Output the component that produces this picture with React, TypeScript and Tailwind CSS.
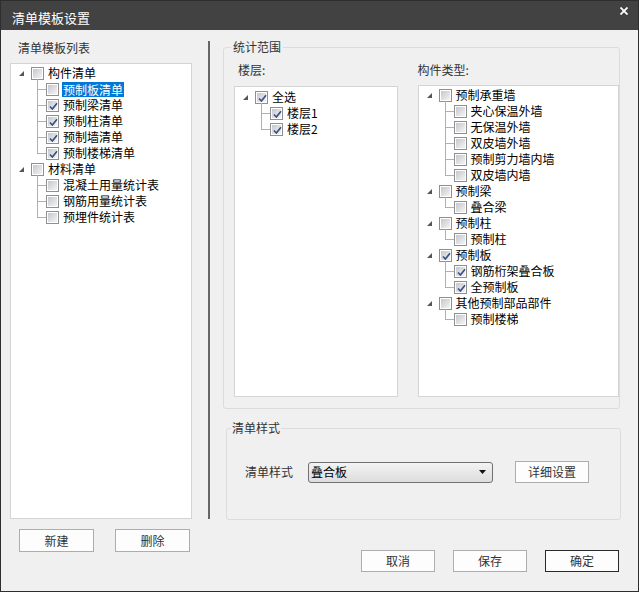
import React from 'react';

type TreeNode = {
  label: string;
  checked?: boolean;
  selected?: boolean;
  children?: TreeNode[];
};

const listTree: TreeNode[] = [
  {
    label: '构件清单',
    children: [
      { label: '预制板清单', selected: true },
      { label: '预制梁清单', checked: true },
      { label: '预制柱清单', checked: true },
      { label: '预制墙清单', checked: true },
      { label: '预制楼梯清单', checked: true },
    ],
  },
  {
    label: '材料清单',
    children: [
      { label: '混凝土用量统计表' },
      { label: '钢筋用量统计表' },
      { label: '预埋件统计表' },
    ],
  },
];

const floorTree: TreeNode[] = [
  {
    label: '全选',
    checked: true,
    children: [
      { label: '楼层1', checked: true },
      { label: '楼层2', checked: true },
    ],
  },
];

const typeTree: TreeNode[] = [
  {
    label: '预制承重墙',
    children: [
      { label: '夹心保温外墙' },
      { label: '无保温外墙' },
      { label: '双皮墙外墙' },
      { label: '预制剪力墙内墙' },
      { label: '双皮墙内墙' },
    ],
  },
  { label: '预制梁', children: [{ label: '叠合梁' }] },
  { label: '预制柱', children: [{ label: '预制柱' }] },
  {
    label: '预制板',
    checked: true,
    children: [
      { label: '钢筋桁架叠合板', checked: true },
      { label: '全预制板', checked: true },
    ],
  },
  { label: '其他预制部品部件', children: [{ label: '预制楼梯' }] },
];

const CheckBox = ({ checked }: { checked?: boolean }) => (
  <span className="relative flex h-[13px] w-[13px] shrink-0 items-center justify-center border border-[#8e8f8f] bg-white">
    <span className="h-[9px] w-[9px] bg-linear-to-br from-[#c4c7cc] to-[#f4f4f4]" />
    {checked && (
      <svg className="absolute left-[1px] top-[1px]" width="11" height="11" viewBox="0 0 11 11">
        <path d="M2 5.5 L4.4 8 L9 2.2" fill="none" stroke="#3d4f8c" strokeWidth="1.7" />
      </svg>
    )}
  </span>
);

const Expander = () => (
  <svg className="mt-[1px] shrink-0" width="5" height="5" viewBox="0 0 5 5">
    <path d="M5 0 L5 5 L0 5 Z" fill="#555" />
  </svg>
);

const Tree = ({ nodes, className }: { nodes: TreeNode[]; className: string }) => (
  <div className={`flex flex-col ${className}`}>
    {nodes.map((node) => (
      <React.Fragment key={node.label}>
        <div className="flex h-4 items-center pl-[8px]">
          <Expander />
          <span className="ml-[7px]">
            <CheckBox checked={node.checked} />
          </span>
          <span className="ml-[4px] leading-4 whitespace-nowrap">{node.label}</span>
        </div>
        {node.children?.map((child, i) => {
          const last = i === node.children!.length - 1;
          return (
            <div key={child.label + i} className="relative flex h-4 items-center pl-[35px]">
              {/* tree connector lines */}
              <span
                className={`absolute left-[26px] w-px bg-[#b0b0b0] ${i === 0 ? '-top-[2px]' : 'top-0'} ${
                  last ? 'h-[9px]' : 'h-4'
                } ${i === 0 && last ? 'h-[11px]' : ''} ${i === 0 && !last ? 'h-[18px]' : ''}`}
              />
              <span className="absolute left-[26px] top-[8px] h-px w-[9px] bg-[#b0b0b0]" />
              <CheckBox checked={child.checked} />
              {child.selected ? (
                <span className="ml-[3px] bg-[#0078d7] px-[1px] leading-[15px] whitespace-nowrap text-white">
                  {child.label}
                </span>
              ) : (
                <span className="ml-[4px] leading-4 whitespace-nowrap">{child.label}</span>
              )}
            </div>
          );
        })}
      </React.Fragment>
    ))}
  </div>
);

const Button = ({ label, primary, className = '' }: { label: string; primary?: boolean; className?: string }) => (
  <button
    className={`flex items-center justify-center border bg-[#fdfdfd] text-[12px] text-[#333] ${
      primary ? 'border-[#2a2a2a]' : 'border-[#adadad]'
    } ${className}`}
  >
    {label}
  </button>
);

export default function App() {
  return (
    <div
      className="flex h-[592px] w-[639px] flex-col border border-[#2e2e2e] bg-[#f0f0f0] text-[12px] text-black"
      style={{ fontFamily: '"Noto Sans CJK SC", "Noto Sans", sans-serif' }}
    >
      {/* title bar */}
      <div className="flex h-[29px] shrink-0 items-center justify-between bg-[#424242] pl-[11px] pr-[10px]">
        <span className="mt-[5px] text-[13px] text-white">清单模板设置</span>
        <svg className="-mt-[9px]" width="8" height="8" viewBox="0 0 8 8">
          <path d="M0.5 0.5 L7.5 7.5 M7.5 0.5 L0.5 7.5" stroke="#fff" strokeWidth="1.8" />
        </svg>
      </div>

      <div className="flex flex-1">
        {/* left: template list */}
        <div className="ml-[9px] flex w-[182px] flex-col pt-[10px]">
          <div className="pl-[8px] leading-4 text-[#333]">清单模板列表</div>
          <div className="mt-[7px] h-[456px] border border-[#d4d4d4] bg-white">
            <Tree nodes={listTree} className="pt-[1px]" />
          </div>
          <div className="mt-[10px] flex gap-[21px] pl-[9px]">
            <Button label="新建" className="h-[23px] w-[75px]" />
            <Button label="删除" className="h-[23px] w-[75px]" />
          </div>
        </div>

        {/* splitter */}
        <div className="ml-[16px] mt-[11px] h-[478px] w-[2px] bg-[#666]" />

        {/* right */}
        <div className="flex flex-1 flex-col">
          <div className="relative ml-[13px] mt-[17px] h-[362px] w-[397px] rounded-[3px] border border-[#dcdcdc]">
            <span className="absolute -top-[9px] left-[7px] bg-[#f0f0f0] px-[2px] leading-4 text-[#333]">统计范围</span>
            <div className="flex pt-[14px]">
              <div className="ml-[10px] flex w-[164px] flex-col">
                <div className="pl-[4px] leading-4 text-[#333]">楼层:</div>
                <div className="mt-[8px] h-[311px] border border-[#d4d4d4] bg-white">
                  <Tree nodes={floorTree} className="pt-[2px]" />
                </div>
              </div>
              <div className="ml-[20px] flex w-[202px] flex-col">
                <div className="leading-4 text-[#333]">构件类型:</div>
                <div className="mt-[7px] h-[312px] border border-[#d4d4d4] bg-white">
                  <Tree nodes={typeTree} className="pt-[1px]" />
                </div>
              </div>
            </div>
          </div>

          <div className="relative ml-[16px] mt-[19px] h-[92px] w-[395px] rounded-[3px] border border-[#dcdcdc]">
            <span className="absolute -top-[9px] left-[4px] bg-[#f0f0f0] px-[1px] leading-4 text-[#333]">清单样式</span>
            <div className="flex h-[22px] items-center pl-[18px] mt-[32px]">
              <span className="w-[48px] leading-4 text-[#333]">清单样式</span>
              <div className="ml-[15px] flex h-[21px] w-[185px] items-center justify-between rounded-[3px] border border-[#707070] bg-linear-to-b from-[#f3f3f3] to-[#dddddd] pl-[2px] pr-[6px]">
                <span className="leading-4">叠合板</span>
                <svg width="7" height="4" viewBox="0 0 7 4">
                  <path d="M0 0 L7 0 L3.5 4 Z" fill="#111" />
                </svg>
              </div>
              <Button label="详细设置" className="ml-[22px] h-[22px] w-[74px]" />
            </div>
          </div>

          <div className="mt-[30px] flex justify-end gap-[18px] pr-[19px]">
            <Button label="取消" className="h-[22px] w-[74px]" />
            <Button label="保存" className="h-[22px] w-[74px]" />
            <Button label="确定" primary className="h-[22px] w-[74px]" />
          </div>
        </div>
      </div>
    </div>
  );
}
